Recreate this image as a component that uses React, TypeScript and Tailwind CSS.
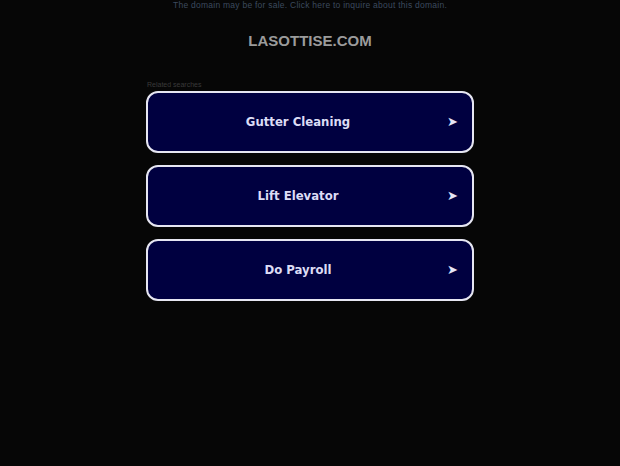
import React from "react";

const items = ["Gutter Cleaning", "Lift Elevator", "Do Payroll"];

export default function App() {
  return (
    <div className="min-h-[466px] w-full bg-[#060606] flex flex-col items-center" style={{ fontFamily: "'Liberation Sans', Arial, sans-serif" }}>
      <div className="h-[11px] pt-px text-[8.5px] leading-[9px] text-[#3c4a5e] tracking-[0.25px]">
        The domain may be for sale. Click here to inquire about this domain.
      </div>
      <div className="mt-[21px] text-[15px] leading-[18px] font-bold text-[#9b9b9b]">
        LASOTTISE.COM
      </div>
      <div className="mt-[31px] w-[328px]">
        <div className="text-[7px] leading-[8px] text-[#3a3a3a] pl-px">Related searches</div>
        <div className="mt-[2px] flex flex-col gap-[12px]">
          {items.map((t) => (
            <div
              key={t}
              className="relative h-[62px] rounded-[12px] border-2 border-[#e6e6f2] bg-[#000040] flex items-center justify-center pr-[24px]"
            >
              <span className="text-[13px] font-bold text-[#dcdcf5]" style={{ fontFamily: "'DejaVu Sans Condensed', 'DejaVu Sans', sans-serif", fontStretch: "condensed" }}>
                {t}
              </span>
              <span className="absolute right-[14px] top-1/2 -translate-y-1/2 text-[#e6e6f6] text-[13px]" style={{ fontFamily: "'DejaVu Sans', sans-serif" }}>
                ➤
              </span>
            </div>
          ))}
        </div>
      </div>
    </div>
  );
}
